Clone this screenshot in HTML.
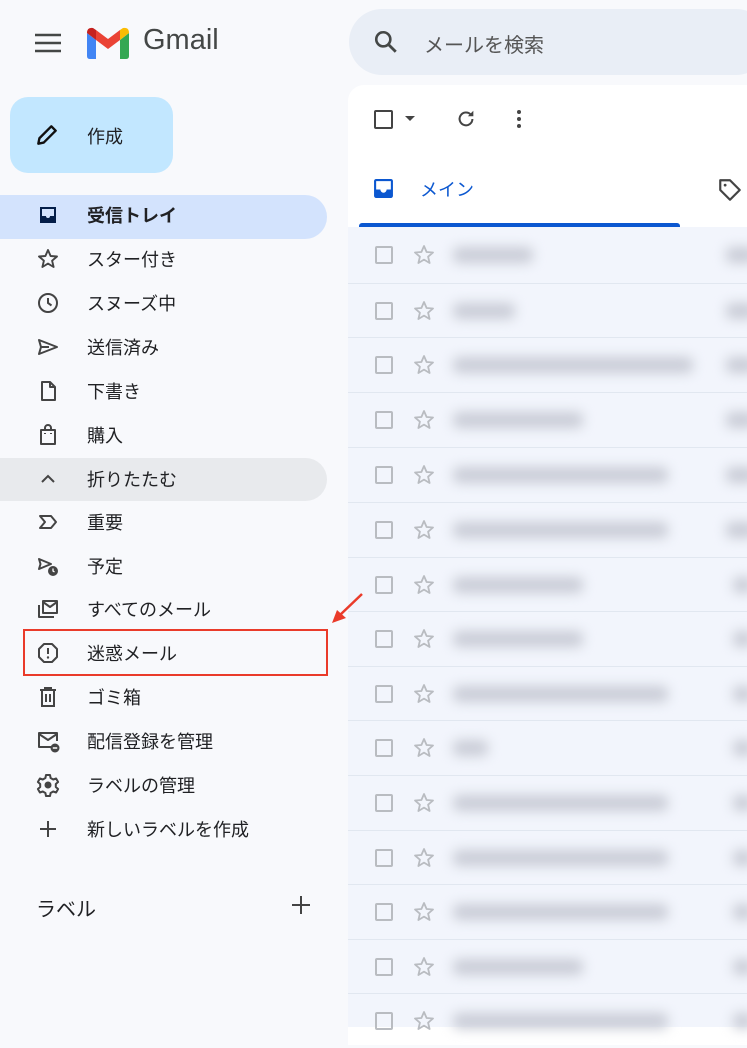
<!DOCTYPE html>
<html><head><meta charset="utf-8"><style>
*{margin:0;padding:0;box-sizing:border-box}
body{width:747px;height:1024px;overflow:hidden;background:#f8f9fc;font-family:"Liberation Sans","Noto Sans CJK JP",sans-serif;position:relative;color:#202124}
.a{position:absolute}
.nav{position:absolute;left:0;width:327px;height:44px;display:flex;align-items:center;font-size:18px;color:#202124}
.nav svg{position:absolute;left:36px;width:24px;height:24px}
.nav span{position:absolute;left:87px}
.row{position:absolute;left:348px;width:399px;height:55px;border-top:1px solid #e1e7f0}
.cb{position:absolute;left:27px;top:18px;width:18px;height:18px;border:2px solid #b9bcc1;border-radius:2px}
.st{position:absolute;left:64px;top:15px}
.bl{position:absolute;top:19px;height:16px;background:#c9ccd6;filter:blur(6px);border-radius:6px}
</style></head><body>
<svg class="a" style="left:35px;top:33px" width="26" height="20" viewBox="0 0 26 20"><path d="M0 2h26M0 10h26M0 18h26" stroke="#444746" stroke-width="2.6"/></svg>
<svg class="a" style="left:87px;top:27px" width="42" height="32" viewBox="0 0 42 32">
<path d="M0 6v23q0 3 3 3h6V13z" fill="#4285f4"/>
<path d="M33 13v19h6q3 0 3-3V6z" fill="#34a853"/>
<path d="M9 13L21 22 33 13V3L21 12 9 3z" fill="#ea4335"/>
<path d="M0 6Q0 0 6 1L9 3v10L0 6z" fill="#c5221f"/>
<path d="M42 6Q42 0 36 1L33 3v10l9-7z" fill="#fbbc04"/>
</svg>
<div class="a" style="left:143px;top:24px;font-size:29px;color:#444746">Gmail</div>
<div class="a" style="left:349px;top:9px;width:420px;height:66px;border-radius:33px;background:#e9eef6"></div>
<svg class="a" style="left:373px;top:29px" width="26" height="26" viewBox="0 0 24 24"><circle cx="9.5" cy="9.5" r="6.5" fill="none" stroke="#444746" stroke-width="2.4"/><path d="M14.5 14.5L21 21" stroke="#444746" stroke-width="2.6"/></svg>
<div class="a" style="left:424px;top:29px;font-size:20px;color:#555">メールを検索</div>
<div class="a" style="left:10px;top:97px;width:163px;height:76px;border-radius:18px;background:#c2e7ff"></div>
<svg class="a" style="left:34px;top:121px" width="26" height="28" viewBox="0 0 24 24"><path d="M4 20l1-5L16 4l4 4L9 19z" fill="none" stroke="#111" stroke-width="2.2" stroke-linejoin="round"/></svg>
<div class="a" style="left:87px;top:123px;font-size:18px;color:#202124">作成</div>
<div class="a" style="left:0;top:195px;width:327px;height:44px;background:#d3e3fd;border-radius:0 22px 22px 0"></div>
<div class="a" style="left:0;top:458px;width:327px;height:43px;background:#e8eaed;border-radius:0 22px 22px 0"></div>
<div class="nav" style="top:193px;font-weight:bold"><svg viewBox="0 0 24 24"><path d="M4 4h16v16H4z" fill="#041e49"/><path d="M6 6h12v7h-4a2 2 0 0 1-4 0H6z" fill="#d3e3fd"/></svg><span>受信トレイ</span></div>
<div class="nav" style="top:237px"><svg viewBox="0 0 24 24"><path d="M12 3l2.6 6 6.4.5-4.9 4.2 1.5 6.3L12 16.6 6.4 20l1.5-6.3L3 9.5 9.4 9z" fill="none" stroke="#444" stroke-width="1.9" stroke-linejoin="round"/></svg><span>スター付き</span></div>
<div class="nav" style="top:281px"><svg viewBox="0 0 24 24"><circle cx="12" cy="12" r="9" fill="none" stroke="#444" stroke-width="2"/><path d="M12 7v5l3.5 2.5" fill="none" stroke="#444" stroke-width="2"/></svg><span>スヌーズ中</span></div>
<div class="nav" style="top:325px"><svg viewBox="0 0 24 24"><path d="M3 5l18 7-18 7 2-7z M5 12h8" fill="none" stroke="#444" stroke-width="2" stroke-linejoin="round"/></svg><span>送信済み</span></div>
<div class="nav" style="top:369px"><svg viewBox="0 0 24 24"><path d="M6 3h8l5 5v13H6z M14 3v5h5" fill="none" stroke="#444" stroke-width="2" stroke-linejoin="round"/></svg><span>下書き</span></div>
<div class="nav" style="top:413px"><svg viewBox="0 0 24 24"><path d="M5 7h14v14H5z M9 7V5a3 3 0 0 1 6 0v2 M9 10v1 M15 10v1" fill="none" stroke="#444" stroke-width="2" stroke-linejoin="round"/></svg><span>購入</span></div>
<div class="nav" style="top:457px"><svg viewBox="0 0 24 24"><path d="M6 15l6-6 6 6" fill="none" stroke="#444" stroke-width="2"/></svg><span>折りたたむ</span></div>
<div class="nav" style="top:500px"><svg viewBox="0 0 24 24"><path d="M4 6h11l5 6-5 6H4l5-6z" fill="none" stroke="#444" stroke-width="2" stroke-linejoin="round"/></svg><span>重要</span></div>
<div class="nav" style="top:544px"><svg viewBox="0 0 24 24"><path d="M3 5l12 5-12 5 1.5-5z" fill="none" stroke="#444" stroke-width="2" stroke-linejoin="round"/><circle cx="17" cy="17" r="5" fill="#444"/><path d="M17 14.5v2.5l1.5 1" stroke="#fff" stroke-width="1.3" fill="none"/></svg><span>予定</span></div>
<div class="nav" style="top:587px"><svg viewBox="0 0 24 24"><path d="M7 4h14v12H7z M7 5l7 5 7-5 M3 8v12h15" fill="none" stroke="#444" stroke-width="2" stroke-linejoin="round"/></svg><span>すべてのメール</span></div>
<div class="nav" style="top:631px"><svg viewBox="0 0 24 24"><path d="M8 3h8l5 5v8l-5 5H8l-5-5V8z" fill="none" stroke="#444" stroke-width="2" stroke-linejoin="round"/><path d="M12 7v6" stroke="#444" stroke-width="2"/><circle cx="12" cy="16.5" r="1.2" fill="#444"/></svg><span>迷惑メール</span></div>
<div class="nav" style="top:675px"><svg viewBox="0 0 24 24"><path d="M4 5h16 M9 5V3h6v2 M6 5v16h12V5 M10 9v8 M14 9v8" fill="none" stroke="#444" stroke-width="2"/></svg><span>ゴミ箱</span></div>
<div class="nav" style="top:719px"><svg viewBox="0 0 24 24"><path d="M15 18H3V4h18v8 M3 5l9 6 9-6" fill="none" stroke="#444" stroke-width="2" stroke-linejoin="round"/><circle cx="19" cy="19" r="4.5" fill="#444"/><path d="M16.8 19h4.4" stroke="#fff" stroke-width="1.5"/></svg><span>配信登録を管理</span></div>
<div class="nav" style="top:763px"><svg viewBox="0 0 24 24"><path d="M10 2h4l.6 3 2.6 1.5 2.9-1 2 3.5-2.3 2v3l2.3 2-2 3.5-2.9-1-2.6 1.5-.6 3h-4l-.6-3-2.6-1.5-2.9 1-2-3.5 2.3-2v-3l-2.3-2 2-3.5 2.9 1L9.4 5z" fill="none" stroke="#444" stroke-width="2" stroke-linejoin="round"/><circle cx="12" cy="12" r="3.5" fill="#444"/></svg><span>ラベルの管理</span></div>
<div class="nav" style="top:807px"><svg viewBox="0 0 24 24"><path d="M12 4v16M4 12h16" stroke="#444" stroke-width="2"/></svg><span>新しいラベルを作成</span></div>
<div class="a" style="left:36px;top:893px;font-size:20px;color:#202124">ラベル</div>
<svg class="a" style="left:291px;top:895px" width="20" height="20" viewBox="0 0 20 20"><path d="M10 1v18M1 10h18" stroke="#444" stroke-width="2"/></svg>
<div class="a" style="left:23px;top:629px;width:305px;height:47px;border:2.5px solid #ea3b2a"></div>
<div class="a" style="left:348px;top:85px;width:420px;height:960px;background:#fff;border-radius:16px 0 0 0"></div>
<div class="a" style="left:374px;top:110px;width:19px;height:19px;border:2px solid #444;border-radius:2px"></div>
<svg class="a" style="left:404px;top:115px" width="12" height="8"><path d="M1 1h10L6 6z" fill="#444"/></svg>
<svg class="a" style="left:455px;top:108px" width="22" height="22" viewBox="0 0 24 24"><path d="M19 12a7 7 0 1 1-2-5" fill="none" stroke="#444" stroke-width="2.2"/><path d="M20 3v6h-6z" fill="#444"/></svg>
<svg class="a" style="left:515px;top:108px" width="8" height="22"><circle cx="4" cy="4" r="2" fill="#444"/><circle cx="4" cy="11" r="2" fill="#444"/><circle cx="4" cy="18" r="2" fill="#444"/></svg>
<svg class="a" style="left:373px;top:178px" width="21" height="21" viewBox="0 0 20 20"><rect x="1" y="1" width="18" height="18" rx="2" fill="#0b57d0"/><path d="M3 3h14v8h-4a3 3 0 0 1-6 0H3z" fill="#fff"/></svg>
<div class="a" style="left:420px;top:176px;font-size:18px;color:#0b57d0">メイン</div>
<svg class="a" style="left:717px;top:177px" width="26" height="26" viewBox="0 0 24 24"><path d="M3 3h9l9 9-9 9-9-9z" fill="none" stroke="#444" stroke-width="2" stroke-linejoin="round"/><circle cx="7.5" cy="7.5" r="1.3" fill="#444"/></svg>
<div class="a" style="left:359px;top:223px;width:321px;height:4px;background:#0b57d0;border-radius:3px 3px 0 0"></div>
<div class="a" style="left:348px;top:227px;width:399px;height:800px;background:#f2f5fc"></div>
<svg class="a" style="left:328px;top:590px;z-index:5" width="40" height="40" viewBox="0 0 40 40"><path d="M34 4L12 25" stroke="#ea3b2a" stroke-width="2.5"/><path d="M4 33l5-13 9 8z" fill="#ea3b2a"/></svg>
<div class="row" style="top:228px;border-top:none"><div class="cb"></div><svg class="st" width="24" height="24" viewBox="0 0 24 24"><path d="M12 3l2.6 6 6.4.5-4.9 4.2 1.5 6.3L12 16.6 6.4 20l1.5-6.3L3 9.5 9.4 9z" fill="none" stroke="#b9bcc1" stroke-width="1.8" stroke-linejoin="round"/></svg><div class="bl" style="left:105px;width:80px"></div><div class="bl" style="left:378px;width:30px"></div></div>
<div class="row" style="top:283px"><div class="cb"></div><svg class="st" width="24" height="24" viewBox="0 0 24 24"><path d="M12 3l2.6 6 6.4.5-4.9 4.2 1.5 6.3L12 16.6 6.4 20l1.5-6.3L3 9.5 9.4 9z" fill="none" stroke="#b9bcc1" stroke-width="1.8" stroke-linejoin="round"/></svg><div class="bl" style="left:105px;width:62px"></div><div class="bl" style="left:378px;width:30px"></div></div>
<div class="row" style="top:337px"><div class="cb"></div><svg class="st" width="24" height="24" viewBox="0 0 24 24"><path d="M12 3l2.6 6 6.4.5-4.9 4.2 1.5 6.3L12 16.6 6.4 20l1.5-6.3L3 9.5 9.4 9z" fill="none" stroke="#b9bcc1" stroke-width="1.8" stroke-linejoin="round"/></svg><div class="bl" style="left:105px;width:240px"></div><div class="bl" style="left:378px;width:30px"></div></div>
<div class="row" style="top:392px"><div class="cb"></div><svg class="st" width="24" height="24" viewBox="0 0 24 24"><path d="M12 3l2.6 6 6.4.5-4.9 4.2 1.5 6.3L12 16.6 6.4 20l1.5-6.3L3 9.5 9.4 9z" fill="none" stroke="#b9bcc1" stroke-width="1.8" stroke-linejoin="round"/></svg><div class="bl" style="left:105px;width:130px"></div><div class="bl" style="left:378px;width:30px"></div></div>
<div class="row" style="top:447px"><div class="cb"></div><svg class="st" width="24" height="24" viewBox="0 0 24 24"><path d="M12 3l2.6 6 6.4.5-4.9 4.2 1.5 6.3L12 16.6 6.4 20l1.5-6.3L3 9.5 9.4 9z" fill="none" stroke="#b9bcc1" stroke-width="1.8" stroke-linejoin="round"/></svg><div class="bl" style="left:105px;width:215px"></div><div class="bl" style="left:378px;width:30px"></div></div>
<div class="row" style="top:502px"><div class="cb"></div><svg class="st" width="24" height="24" viewBox="0 0 24 24"><path d="M12 3l2.6 6 6.4.5-4.9 4.2 1.5 6.3L12 16.6 6.4 20l1.5-6.3L3 9.5 9.4 9z" fill="none" stroke="#b9bcc1" stroke-width="1.8" stroke-linejoin="round"/></svg><div class="bl" style="left:105px;width:215px"></div><div class="bl" style="left:378px;width:30px"></div></div>
<div class="row" style="top:557px"><div class="cb"></div><svg class="st" width="24" height="24" viewBox="0 0 24 24"><path d="M12 3l2.6 6 6.4.5-4.9 4.2 1.5 6.3L12 16.6 6.4 20l1.5-6.3L3 9.5 9.4 9z" fill="none" stroke="#b9bcc1" stroke-width="1.8" stroke-linejoin="round"/></svg><div class="bl" style="left:105px;width:130px"></div><div class="bl" style="left:385px;width:20px"></div></div>
<div class="row" style="top:611px"><div class="cb"></div><svg class="st" width="24" height="24" viewBox="0 0 24 24"><path d="M12 3l2.6 6 6.4.5-4.9 4.2 1.5 6.3L12 16.6 6.4 20l1.5-6.3L3 9.5 9.4 9z" fill="none" stroke="#b9bcc1" stroke-width="1.8" stroke-linejoin="round"/></svg><div class="bl" style="left:105px;width:130px"></div><div class="bl" style="left:385px;width:20px"></div></div>
<div class="row" style="top:666px"><div class="cb"></div><svg class="st" width="24" height="24" viewBox="0 0 24 24"><path d="M12 3l2.6 6 6.4.5-4.9 4.2 1.5 6.3L12 16.6 6.4 20l1.5-6.3L3 9.5 9.4 9z" fill="none" stroke="#b9bcc1" stroke-width="1.8" stroke-linejoin="round"/></svg><div class="bl" style="left:105px;width:215px"></div><div class="bl" style="left:385px;width:20px"></div></div>
<div class="row" style="top:720px"><div class="cb"></div><svg class="st" width="24" height="24" viewBox="0 0 24 24"><path d="M12 3l2.6 6 6.4.5-4.9 4.2 1.5 6.3L12 16.6 6.4 20l1.5-6.3L3 9.5 9.4 9z" fill="none" stroke="#b9bcc1" stroke-width="1.8" stroke-linejoin="round"/></svg><div class="bl" style="left:105px;width:35px"></div><div class="bl" style="left:385px;width:20px"></div></div>
<div class="row" style="top:775px"><div class="cb"></div><svg class="st" width="24" height="24" viewBox="0 0 24 24"><path d="M12 3l2.6 6 6.4.5-4.9 4.2 1.5 6.3L12 16.6 6.4 20l1.5-6.3L3 9.5 9.4 9z" fill="none" stroke="#b9bcc1" stroke-width="1.8" stroke-linejoin="round"/></svg><div class="bl" style="left:105px;width:215px"></div><div class="bl" style="left:385px;width:20px"></div></div>
<div class="row" style="top:830px"><div class="cb"></div><svg class="st" width="24" height="24" viewBox="0 0 24 24"><path d="M12 3l2.6 6 6.4.5-4.9 4.2 1.5 6.3L12 16.6 6.4 20l1.5-6.3L3 9.5 9.4 9z" fill="none" stroke="#b9bcc1" stroke-width="1.8" stroke-linejoin="round"/></svg><div class="bl" style="left:105px;width:215px"></div><div class="bl" style="left:385px;width:20px"></div></div>
<div class="row" style="top:884px"><div class="cb"></div><svg class="st" width="24" height="24" viewBox="0 0 24 24"><path d="M12 3l2.6 6 6.4.5-4.9 4.2 1.5 6.3L12 16.6 6.4 20l1.5-6.3L3 9.5 9.4 9z" fill="none" stroke="#b9bcc1" stroke-width="1.8" stroke-linejoin="round"/></svg><div class="bl" style="left:105px;width:215px"></div><div class="bl" style="left:385px;width:20px"></div></div>
<div class="row" style="top:939px"><div class="cb"></div><svg class="st" width="24" height="24" viewBox="0 0 24 24"><path d="M12 3l2.6 6 6.4.5-4.9 4.2 1.5 6.3L12 16.6 6.4 20l1.5-6.3L3 9.5 9.4 9z" fill="none" stroke="#b9bcc1" stroke-width="1.8" stroke-linejoin="round"/></svg><div class="bl" style="left:105px;width:130px"></div><div class="bl" style="left:385px;width:20px"></div></div>
<div class="row" style="top:993px"><div class="cb"></div><svg class="st" width="24" height="24" viewBox="0 0 24 24"><path d="M12 3l2.6 6 6.4.5-4.9 4.2 1.5 6.3L12 16.6 6.4 20l1.5-6.3L3 9.5 9.4 9z" fill="none" stroke="#b9bcc1" stroke-width="1.8" stroke-linejoin="round"/></svg><div class="bl" style="left:105px;width:215px"></div><div class="bl" style="left:385px;width:20px"></div></div>
</body></html>
